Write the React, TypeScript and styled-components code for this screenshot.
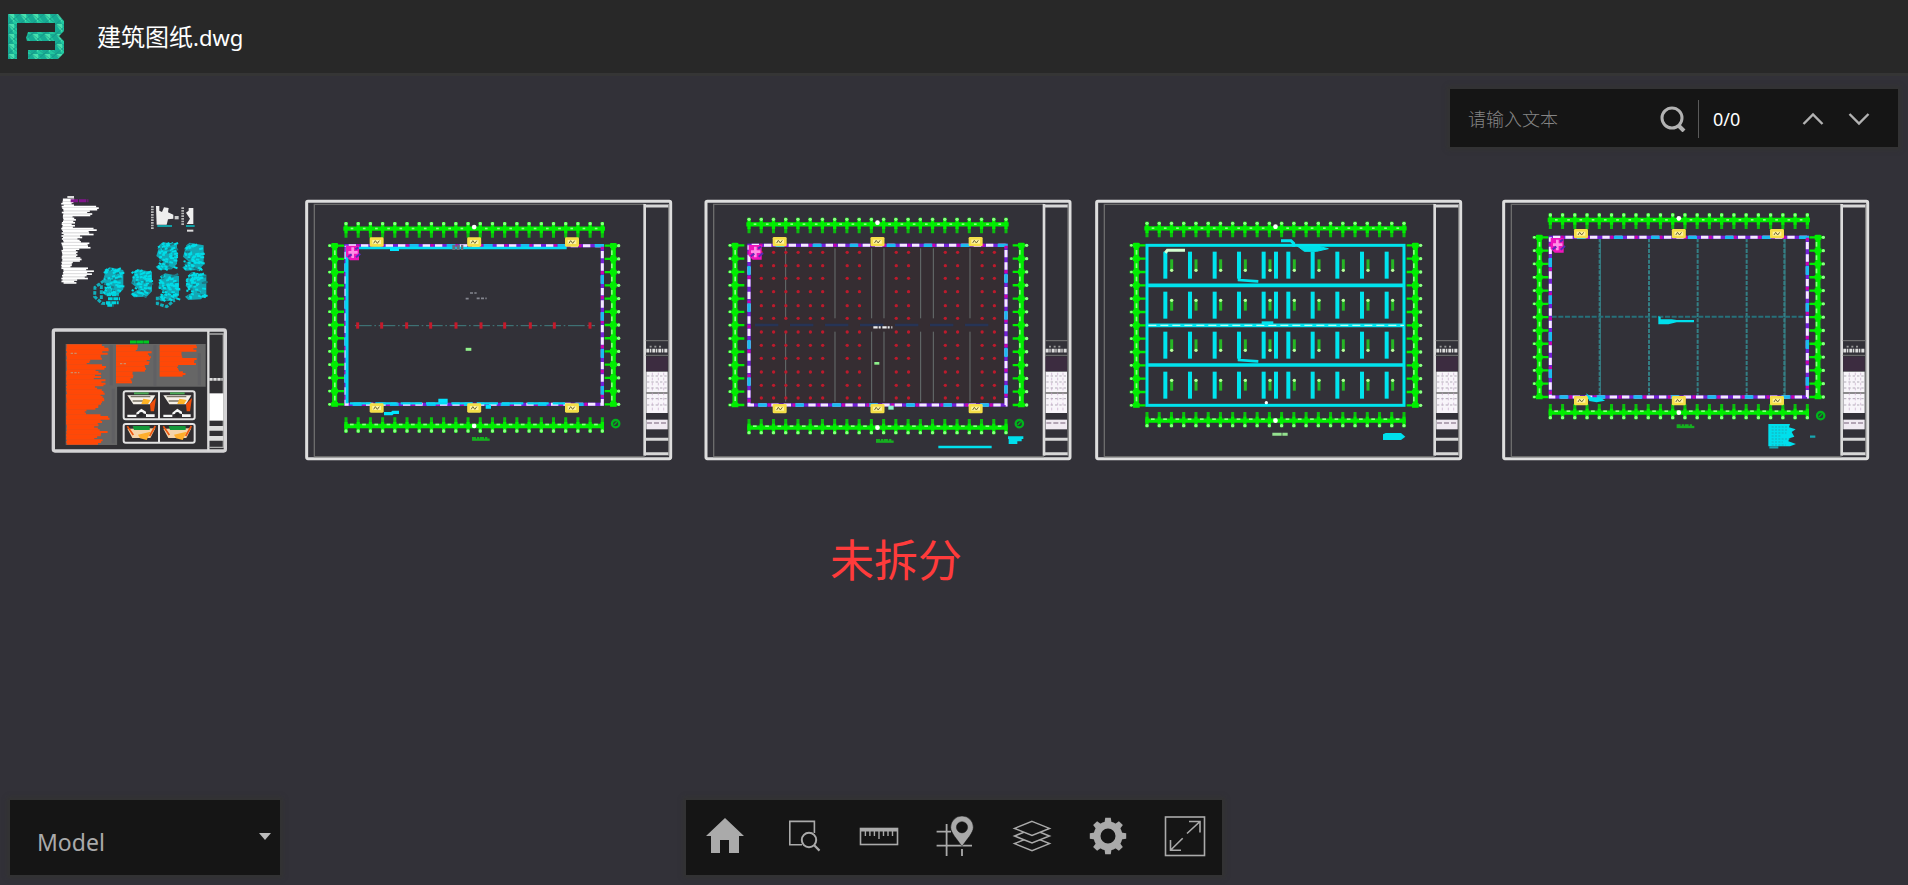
import React from "react";
import styled, { createGlobalStyle } from "styled-components";

const GlobalStyle = createGlobalStyle`
  * { box-sizing: border-box; }
  body {
    margin: 0;
    background: #323138;
    color: #fff;
    font-family: "Noto Sans", "Noto Sans CJK SC", sans-serif;
  }
`;

const Page = styled.div`
  display: flex;
  flex-direction: column;
  min-height: 100vh;
`;

const Header = styled.header`
  display: flex;
  align-items: center;
  gap: 32px;
  height: 76px;
  padding: 0 8px;
  background: #282828;
  border-bottom: 3px solid #353535;
`;

const FileName = styled.h1`
  margin: 0;
  font-size: 24px;
  line-height: 32px;
  font-weight: 400;
`;

const Extension = styled.span`
  font-size: 22px;
`;

const Stage = styled.main`
  display: flex;
  flex: 1;
  flex-direction: column;
  padding: 13px 10px 10px;
`;

const panel = `
  background: #151515;
  box-shadow: 0 0 4px 3px #333333;
`;

const SearchBar = styled.form`
  ${panel}
  display: flex;
  align-items: center;
  align-self: flex-end;
  width: 448px;
  height: 58px;
  padding: 2px 14px 0 18px;
`;

const SearchInput = styled.input`
  flex: 1;
  min-width: 0;
  height: 40px;
  padding: 0;
  border: 0;
  outline: 0;
  background: transparent;
  color: #ccc;
  font-family: inherit;
  font-size: 18px;
  &::placeholder { color: #858585; font-weight: 300; opacity: 1; }
`;

const IconButton = styled.button<{ $width: number }>`
  display: flex;
  align-items: center;
  justify-content: center;
  width: ${(p) => p.$width}px;
  height: 40px;
  padding: 0;
  border: 0;
  background: transparent;
  color: #b2b2b2;
  cursor: pointer;
`;

const MatchCount = styled.output`
  width: 94px;
  margin-left: 4px;
  padding-left: 14px;
  border-left: 1px solid #5a5a5a;
  font-size: 18px;
  line-height: 38px;
`;

const Drawing = styled.svg`
  display: block;
  width: calc(100% + 20px);
  height: auto;
  margin: 33px -10px 0;
`;

const Notice = styled.p`
  margin: 58px 0 22px;
  padding-right: 116px;
  color: #ff3b3b;
  font-size: 44px;
  line-height: 64px;
  font-weight: 400;
  text-align: center;
`;

const BottomBar = styled.footer`
  display: grid;
  grid-template-columns: 1fr auto 1fr;
  align-items: end;
  margin-top: auto;
`;

const SpacePicker = styled.div`
  ${panel}
  display: grid;
  align-items: center;
  width: 270px;
  height: 75px;
  > * { grid-area: 1 / 1; }
`;

const SpaceSelect = styled.select`
  width: 100%;
  height: 75px;
  padding: 8px 27px 0;
  border: 0;
  appearance: none;
  background: transparent;
  color: #aaa;
  font-family: inherit;
  font-size: 23px;
`;

const Caret = styled.svg`
  justify-self: end;
  margin: 0 8px 2px 0;
  pointer-events: none;
`;

const Toolbar = styled.nav`
  ${panel}
  display: flex;
  width: 536px;
  height: 75px;
  padding-bottom: 2px;
`;

const Tool = styled.button`
  display: flex;
  flex: 1;
  align-items: center;
  justify-content: center;
  padding: 0;
  border: 0;
  background: transparent;
  color: #aaa;
  cursor: pointer;
`;

const range = (n: number) => Array.from({ length: n }, (_, i) => i);

// Repeatable scatter in 0..1, so that small details look drawn by hand.
const scatter = (n: number) => {
  const v = Math.sin(n * 127.1 + 11.7) * 43758.5453;
  return v - Math.floor(v);
};

const Logo = () => (
  <svg width="57" height="46" viewBox="0 0 57 46" role="img" aria-label="Logo">
    <defs>
      <pattern id="facets" width="12" height="10" patternUnits="userSpaceOnUse">
        <rect width="12" height="10" fill="#22c8a0" />
        <path d="M0 0L6 10L0 10ZM6 0L12 10L12 0Z" fill="#17ab94" />
        <path d="M6 0L0 0L6 8Z" fill="#48e0ae" />
        <path d="M0 10L12 0M0 0L12 10" stroke="#148c80" strokeWidth=".6" />
      </pattern>
    </defs>
    <path
      fill="url(#facets)"
      d="M0 0H50L56 7V17L51 22L56 27V39L50 45H20V36H47V27H19L18 24L20 18H47V9H9V45H0Z"
    />
  </svg>
);

interface PlanProps {
  x0: number; x1: number; y0: number; y1: number;
  top: number; bottom: number; left: number; right: number;
}

const Dimensions = ({ x0, x1, y0, y1, top, bottom, left, right }: PlanProps) => {
  const xs = range(22).map((i) => x0 + ((x1 - x0) * i) / 21);
  const ys = range(13).map((i) => y0 + ((y1 - y0) * i) / 12);
  return (
    <g stroke="#00ee00" fill="none">
      <path strokeWidth="13" d={`M${x0 - 8} ${top}H${x1 + 8}M${x0 - 5} ${bottom}H${x1 + 5}`} />
      <path strokeWidth="15" d={`M${left} ${y0 - 8}V${y1 + 6}M${right} ${y0 - 8}V${y1 + 6}`} />
      <path
        strokeWidth="10"
        d={xs.map((x) => `M${x} ${top - 20}V${top + 14}M${x} ${bottom - 12}V${bottom + 20}`).join("")}
      />
      <path
        strokeWidth="9"
        opacity=".75"
        d={xs.map((x) => `M${x} ${top + 12}V${top + 27}M${x} ${bottom - 26}V${bottom - 10}`).join("")}
      />
      <path
        strokeWidth="7"
        d={ys.map((y) => `M${left - 20} ${y}H${left + 28}M${right - 26} ${y}H${right + 20}`).join("")}
      />
      <path
        strokeWidth="14"
        d={ys.map((y) => `M${left - 10} ${y}H${left + 10}M${right - 10} ${y}H${right + 10}`).join("")}
      />
      <g stroke="none" fill="#8cff84">
        {xs.map((x, i) => (
          <React.Fragment key={i}>
            <circle cx={x} cy={top - 15} r="5" />
            <circle cx={x} cy={bottom + 15} r="5" />
            {i < 21 && <rect x={x + 14} y={top - 3} width="8" height="5" />}
            {i < 21 && <rect x={x + 12} y={bottom - 7} width="11" height="5" />}
          </React.Fragment>
        ))}
        {ys.map((y, i) => (
          <React.Fragment key={i}>
            <circle cx={left - 15} cy={y} r="4" />
            <circle cx={right + 16} cy={y} r="5" />
            {i < 12 && <rect x={left - 2} y={y + 14} width="5" height="14" />}
            {i < 12 && <rect x={right - 7} y={y + 14} width="5" height="14" />}
          </React.Fragment>
        ))}
        <circle cx={(x0 + x1) / 2} cy={top - 5} r="7" fill="#fff" />
        <circle cx={(x0 + x1) / 2} cy={bottom} r="7" fill="#fff" />
      </g>
    </g>
  );
};

const Walls = ({ x0, x1, y0, y1 }: PlanProps) => (
  <g fill="none">
    <rect x={x0} y={y0} width={x1 - x0} height={y1 - y0} stroke="#7420d8" strokeWidth="10" />
    <rect x={x0} y={y0} width={x1 - x0} height={y1 - y0} stroke="#f4e8ff" strokeWidth="9" strokeDasharray="22 15" strokeDashoffset="-8" />
    <rect x={x0} y={y0} width={x1 - x0} height={y1 - y0} stroke="#1cbcf0" strokeWidth="10" strokeDasharray="27 84" strokeDashoffset="-80" />
    <rect x={x0} y={y0} width={x1 - x0} height={y1 - y0} stroke="#d000a8" strokeWidth="9" strokeDasharray="8 66" strokeDashoffset="-32" />
  </g>
);

const Stairs = ({ x0, x1, y0, y1 }: PlanProps) => (
  <g>
    {[92, (x1 - x0) / 2, x1 - x0 - 91].flatMap((dx) =>
      [y0 - 11, y1 + 11].map((y) => (
        <g key={`${dx}-${y}`} transform={`translate(${x0 + dx} ${y})`}>
          <rect x="-21" y="-14" width="42" height="28" rx="4" fill="#f5df48" />
          <rect x="-13" y="-6" width="26" height="12" fill="#fff4a0" />
          <path d="M-9 4L-4 -4L2 4L8 -4" stroke="#6d6738" strokeWidth="3" fill="none" />
        </g>
      ))
    )}
  </g>
);

const Pinwheel = ({ x, y }: { x: number; y: number }) => (
  <g transform={`translate(${x} ${y})`}>
    <path d="M-20 -20H19V24H-8L-20 12Z" fill="#f014bc" />
    <path d="M-13 0H15M0 -15V17" stroke="#ff8fe6" strokeWidth="8" />
    <path d="M-14 14L-3 6M8 -9L17 -15M10 15L23 4" stroke="#5b2bb8" strokeWidth="6" />
  </g>
);

const TitleBlock = () => (
  <g>
    <path d="M1049 42V797" stroke="#dcdcdc" strokeWidth="8" />
    <path d="M1121 42V797" stroke="#8a8a8a" strokeWidth="3" />
    <path d="M1049 48H1120M1049 748H1120M1049 791H1120" stroke="#d8d8d8" strokeWidth="9" />
    <path d="M1052 452H1120M1052 496H1120" stroke="#777" strokeWidth="3" />
    <rect x="1054" y="500" width="64" height="43" fill="#3c2c40" />
    <path d="M1054 482H1118" stroke="#ddd" strokeWidth="11" strokeDasharray="9 2 4 3" />
    <path d="M1064 470H1100" stroke="#999" strokeWidth="5" strokeDasharray="6 8" />
    <rect x="1054" y="545" width="64" height="124" fill="#f8f5fa" />
    <path d="M1056 558H1118M1056 576H1118M1056 594H1118M1056 626H1118M1056 645H1118" stroke="#b3acb8" strokeWidth="3" strokeDasharray="7 6" />
    <path d="M1054 609H1118" stroke="#555" strokeWidth="4" />
    <path d="M1072 548V668M1090 548V668M1106 548V668" stroke="#c5a8c8" strokeWidth="2" strokeDasharray="8 7" />
    <rect x="1054" y="689" width="64" height="29" fill="#f0eaf2" />
    <path d="M1056 699H1116" stroke="#9d8da0" strokeWidth="4" strokeDasharray="15 6" />
  </g>
);

interface SheetProps {
  x: number;
  shift?: number;
  plan: PlanProps;
  children: React.ReactNode;
}

// A sheet is drawn at three units per drawing unit.
const Sheet = ({ x, shift = 0, plan, children }: SheetProps) => (
  <g transform={`translate(${x} 10) scale(.33333)`}>
    <g transform={`translate(${shift} 0)`}>
      <rect x="35" y="34" width="1092" height="772" rx="4" fill="none" stroke="#dedede" strokeWidth="9" />
      <path d="M1049 43H58V800H1049" fill="none" stroke="#6c6c6c" strokeWidth="4" />
      <TitleBlock />
    </g>
    <Dimensions {...plan} />
    {children}
  </g>
);

const planA = { x0: 153, x1: 922, y0: 167, y1: 643, top: 116, bottom: 708, left: 119, right: 955 };
const planB = { x0: 162, x1: 933, y0: 166, y1: 645, top: 103, bottom: 713, left: 120, right: 979 };
const planC = { x0: 186, x1: 957, y0: 166, y1: 646, top: 115, bottom: 692, left: 154, right: 991 };
const planD = { x0: 181, x1: 952, y0: 142, y1: 621, top: 90, bottom: 668, left: 148, right: 984 };

const NorthMark = ({ x, y }: { x: number; y: number }) => (
  <g fill="none" stroke="#00b51c">
    <circle cx={x} cy={y} r="11" strokeWidth="7" />
    <path d={`M${x - 5} ${y + 4}L${x + 4} ${y - 5}`} strokeWidth="4" />
  </g>
);

const Caption = ({ x, y }: { x: number; y: number }) => (
  <g stroke="#16b020">
    <path d={`M${x - 27} ${y + 2}H${x + 26}`} strokeWidth="7" />
    <path d={`M${x - 27} ${y - 3}H${x + 20}`} strokeWidth="6" strokeDasharray="12 3 7 2" />
  </g>
);

const GroundFloor = () => (
  <Sheet x={295} plan={planA}>
    <Walls {...planA} />
    <path d="M156 172V640" stroke="#00d8f5" strokeWidth="9" />
    <path d="M190 174H815" stroke="#00dcf2" strokeWidth="8" />
    <path d="M165 640H810" stroke="#00dcf2" strokeWidth="7" strokeDasharray="64 12" />
    <path d="M285 177H312M430 632H458M572 650H588" stroke="#00e5ff" strokeWidth="12" />
    <path d="M267 671H290L294 667H312" stroke="#00e5ff" strokeWidth="10" fill="none" />
    <path d="M472 172H505" stroke="#66717d" strokeWidth="16" strokeDasharray="9 4" />
    <Stairs {...planA} />
    <Pinwheel x={173} y={187} />
    <path d="M180 407H900" stroke="#407d80" strokeWidth="3" strokeDasharray="50 8 5 8" />
    {[188, 260, 335, 407, 483, 558, 629, 706, 778, 885].map((x) => (
      <path key={x} d={`M${x} 397V416`} stroke="#c41a2b" strokeWidth="9" />
    ))}
    <path d="M512 326H525M545 325H575M525 309H545" stroke="#84868f" strokeWidth="5" strokeDasharray="9 4" />
    <path d="M512 478H529" stroke="#91ef8b" strokeWidth="9" />
    <NorthMark x={962} y={701} />
    <Caption x={558} y={747} />
  </Sheet>
);

const ColumnPlan = () => (
  <Sheet x={695} shift={-2} plan={planB}>
    <rect x="166" y="170" width="763" height="471" fill="#38292e" opacity=".55" />
    <path
      d={[272, 420, 530, 567, 677, 715, 825].map((x) => `M${x} 175V385M${x} 425V635`).join("")}
      stroke="#68706f" strokeWidth="3"
    />
    {range(12).flatMap((r) =>
      range(20).map((c) => {
        const x = 199 + c * 36.8;
        const missing = c === 6 || c === 9 || c === 10 || c === 13 || c === 14 || c === 17;
        if (missing) return null;
        return <circle key={`${r}-${c}`} cx={x} cy={[187, 227, 265, 305, 347, 385, 426, 466, 505, 546, 586, 624][r]} r="5" fill="#bd1a2c" />;
      })
    )}
    <path d="M180 405H915" stroke="#263456" strokeWidth="8" strokeDasharray="70 35" />
    <path d="M535 412H592" stroke="#eee" strokeWidth="7" strokeDasharray="13 3 6 5" />
    <path d="M538 520H553" stroke="#8df08b" strokeWidth="8" />
    <Walls {...planB} />
    <Stairs {...planB} />
    <Pinwheel x={181} y={185} />
    <path d="M580 653H596" stroke="#8df6ca" strokeWidth="12" />
    <path d="M730 771H890" stroke="#00dfec" strokeWidth="8" />
    <path d="M939 743H985M941 750H980M941 758H967" stroke="#00dfec" strokeWidth="8" />
    <NorthMark x={973} y={701} />
    <Caption x={570} y={753} />
  </Sheet>
);

const RoofPlan = () => (
  <Sheet x={1085} plan={planC}>
    <g stroke="#00e4ee" fill="none">
      <rect x="186" y="166" width="771" height="480" strokeWidth="9" />
      <path d="M186 286H957M186 406H957M186 525H957" strokeWidth="11" />
      <path d="M190 406H957" stroke="#c0fff0" strokeWidth="4" strokeDasharray="24 12" />
      <path d="M588 152H618L626 160V170" strokeWidth="9" />
      <path d="M637 168H695L730 176L695 184H658Z" fill="#00dfe8" strokeWidth="3" />
      {range(4).map((r) => (
        <g key={r} strokeWidth="12">
          {[241, 315, 389, 462, 536, 573, 610, 683, 757, 831, 905].map((x) => (
            <path key={x} d={`M${x} ${185 + r * 120}V${266 + r * 120}`} />
          ))}
          {r % 2 === 0 && <path d={`M462 ${262 + r * 120}V${270 + r * 120}L520 ${274 + r * 120}`} strokeWidth="8" />}
        </g>
      ))}
      <path d="M530 399H565" strokeWidth="10" />
    </g>
    <path d="M241 188L247 181H300" stroke="#d4ffd2" strokeWidth="9" fill="none" />
    {range(4).flatMap((r) =>
      [260, 333, 407, 481, 555, 628, 702, 775, 849, 923].map((x) => (
        <g key={`${r}-${x}`}>
          <path d={`M${x} ${208 + r * 120}V${242 + r * 120}`} stroke="#26b624" strokeWidth="9" />
          <circle cx={x} cy={(r % 2 ? 211 : 241) + r * 120} r="5" fill="#b7ff9c" />
        </g>
      ))
    )}
    <circle cx="544" cy="638" r="5" fill="#fff" />
    <path d="M894 733L902 729H948L961 740L948 750H894Z" fill="#00dfec" />
    <path d="M562 733H608" stroke="#94e08f" strokeWidth="9" strokeDasharray="28 2" />
  </Sheet>
);

const BeamPlan = () => (
  <Sheet x={1490} shift={6} plan={planD}>
    <path d="M329 145V618M477 145V618M623 145V618M770 145V618M883 145V618" stroke="#337f85" strokeWidth="6" strokeDasharray="12 4" />
    <path d="M331 145V618M885 145V618" stroke="#377f86" strokeWidth="3" />
    <path d="M185 380H948" stroke="#26707a" strokeWidth="6" strokeDasharray="15 5" />
    <path d="M505 378L512 382V388H545L560 390H612V397H560L535 403H505Z" fill="#00dfec" />
    <Walls {...planD} />
    <Stairs {...planD} />
    <Pinwheel x={202} y={164} />
    <path d="M288 610L305 622H330L345 632L320 637L298 633Z" fill="#00dfec" />
    <NorthMark x={992} y={677} />
    <Caption x={587} y={709} />
    <path d="M835 702H900L897 712L917 718L905 726L913 740L898 745L895 754L918 762L900 769H835Z" fill="#00dfec" />
    <path d="M838 772H865M960 740H976" stroke="#17a5b0" strokeWidth="7" />
    {range(7).map((i) => (
      <path key={i} d={`M845 ${711 + i * 9}H${870 + scatter(i) * 35}`} stroke="#25959e" strokeWidth="2" strokeDasharray="6 4" />
    ))}
  </Sheet>
);

const Blob = ({ x, y, seed }: { x: number; y: number; seed: number }) => (
  <g transform={`translate(${x} ${y})`}>
    <path d="M-22 -36L-12 -44L30 -36V22L14 38L-24 40L-34 30L-10 16L-32 -2Z" fill="#12a8b6" />
    {range(60).map((i) => {
      const a = scatter(seed + i);
      const b = scatter(seed * 3 + i * 7 + 90);
      return (
        <path
          key={i}
          d={`M${-32 + a * 54} ${-38 + b * 74}l${6 + a * 6} ${-5 + b * 10}`}
          stroke={i % 5 ? "#00dde8" : "#1d7a86"}
          strokeWidth="6"
        />
      );
    })}
  </g>
);

const NotesAndDetails = () => (
  <g transform="translate(40 0) scale(.33333)">
    {range(58).map((i) => {
      const y = 58 + i * 4.4;
      const section = [[4, 34], [7, 110], [11, 98], [19, 40], [24, 104], [29, 62], [33, 98], [42, 58], [46, 36], [54, 92], [58, 52]].find(([end]) => i <= end)!;
      return (
        <path key={i} d={`M${63 + scatter(i) * 8} ${y}h${section[1] * (0.7 + scatter(i + 8) * 0.3)}`} stroke="#fff" strokeWidth="5" />
      );
    })}
    <path d="M82 51H102" stroke="#ddd" strokeWidth="6" />
    <path d="M92 62H145" stroke="#81158c" strokeWidth="9" strokeDasharray="22 3" />
    <path d="M337 78V148M428 82V136" stroke="#b7b7b7" strokeWidth="8" strokeDasharray="5 3" />
    <path d="M348 78H358V92L366 96L372 82L386 84L384 97L400 104V116L384 118L380 134H350ZM438 98L446 92V84H460V132H440L450 116Z" fill="#eee" />
    <path d="M404 108H416V118H404Z" fill="#ccc" />
    <path d="M352 138H396M438 138H464" stroke="#129ea4" strokeWidth="6" />
    <path d="M441 152H460" stroke="#ddd" strokeWidth="6" />
    <Blob x={381} y={230} seed={3} />
    <Blob x={461} y={232} seed={20} />
    <Blob x={220} y={306} seed={41} />
    <Blob x={306} y={312} seed={67} />
    <Blob x={387} y={324} seed={88} />
    <Blob x={469} y={320} seed={104} />
    <path d="M192 302L165 322L164 350L186 370L205 371M184 316V358M352 350V371L380 380L404 360" stroke="#11aeba" strokeWidth="9" strokeDasharray="11 4" fill="none" />
    <path d="M198 368H236M204 356H240M200 344H236M202 376H220" stroke="#00d4df" strokeWidth="9" strokeDasharray="14 2" />

    <rect x="40" y="450" width="516" height="363" rx="5" fill="#313034" stroke="#d4d3d5" strokeWidth="10" />
    <path d="M77 492H497V620H232V795H77Z" fill="#666" />
    <path d="M270 486H327" stroke="#00c820" strokeWidth="9" strokeDasharray="19 1" />
    {range(60).map((i) => (
      <path key={i} d={`M${78 + scatter(i) * 3} ${496 + i * 5}h${[130, 128, 110, 72, 130, 112, 105, 125, 110, 120][Math.floor(i / 3) % 10] * (0.75 + scatter(i + 5) * 0.25)}`} stroke="#ff4807" strokeWidth="6" />
    ))}
    {range(23).map((i) => (
      <g key={i} stroke="#ff4807" strokeWidth="6">
        <path d={`M228 ${497 + i * 5}h${[68, 107, 102, 90, 55, 50][Math.floor(i / 4)] * (0.86 + scatter(i) * 0.14)}`} />
        {i < 19 && <path d={`M359 ${497 + i * 5}h${[112, 68, 115, 60, 78][Math.floor(i / 4)] * (0.86 + scatter(i + 7) * 0.14)}`} />}
      </g>
    ))}
    <path d="M92 578H118M240 551H260M92 520H110" stroke="#d08b65" strokeWidth="4" strokeDasharray="7 4" />
    <path d="M214 496V616M345 496V618M478 520V616M220 626V790" stroke="#606063" strokeWidth="9" />
    <rect x="232" y="621" width="262" height="184" fill="#303033" />
    <rect x="251" y="634" width="213" height="84" rx="6" fill="#312e31" stroke="#e3e3e3" strokeWidth="6" />
    <rect x="251" y="732" width="213" height="56" rx="6" fill="#312e31" stroke="#e3e3e3" strokeWidth="6" />
    <path d="M357 634V718M357 732V788" stroke="#e3e3e3" strokeWidth="6" />
    {[304, 412].map((x) => (
      <g key={x}>
        <path d={`M${x - 42} 646H${x + 42}L${x + 26} 673H${x - 24}Z`} fill="#f5efe7" />
        <path d={`M${x - 32} 650H${x + 27}M${x - 26} 663H${x + 18}`} stroke="#7a7365" strokeWidth="4" />
        <path d={`M${x + 6} 656L${x + 28} 660L${x + 20} 672H${x}Z`} fill="#ffb326" />
        <path d={`M${x - 22} 640H${x + 22}`} stroke="#4caa56" strokeWidth="6" />
        <path d={`M${x - 42} 711H${x - 15}V698L${x} 686L${x + 14} 695V711H${x + 40}V703H${x + 20}L${x} 700L${x - 18} 704H${x - 42}Z`} fill="#f7f7f7" />
        <circle cx={x} cy="703" r="7" fill="#252529" />
        <path d={`M${x + 26} 672L${x + 44} 654L${x + 38} 694H${x + 28}Z`} fill="#ef4d0b" />
        <path d={`M${x - 42} 746L${x - 27} 774H${x + 27}L${x + 42} 745Z`} fill="#f5d4aa" />
        <path d={`M${x - 26} 738H${x + 25}V750H${x - 22}Z`} fill="#14983a" />
        <path d={`M${x - 10} 764L${x + 28} 755L${x + 16} 780L${x - 4} 775Z`} fill="#ffae2b" />
        <path d={`M${x - 42} 739L${x - 24} 765M${x + 42} 738L${x + 25} 768`} stroke="#ee5710" strokeWidth="5" />
      </g>
    ))}
    <path d="M505 453V812" stroke="#ddd" strokeWidth="7" />
    <path d="M506 462H550V802H506" fill="none" stroke="#aaa" strokeWidth="4" />
    <path d="M508 598H548" stroke="#ddd" strokeWidth="8" strokeDasharray="10 2" />
    <rect x="508" y="640" width="42" height="82" fill="#fff" />
    <path d="M506 745H550M506 775H550" stroke="#ddd" strokeWidth="14" />
  </g>
);

const HomeIcon = () => <path d="M23 3L42 21H37V38H27V25H18V38H9V21H4Z" fill="currentColor" />;

const AreaSearchIcon = () => (
  <g fill="none" stroke="currentColor" strokeWidth="1.6">
    <path d="M35.4 18V6.4H10.8V29.7H23" />
    <circle cx="30" cy="25" r="7.2" strokeWidth="2" />
    <path d="M35.2 30.3L40.5 35.6" strokeWidth="2.2" />
  </g>
);

const RulerIcon = () => (
  <g fill="none" stroke="currentColor" strokeWidth="1.6">
    <rect x="5.5" y="13.5" width="37" height="16" />
    <path d="M5 15H43" strokeWidth="3" />
    <path d="M10.4 16V21M14.9 16V21M19.4 16V21M24 16V24M28.5 16V21M33 16V21M37.5 16V21" strokeWidth="1.4" />
  </g>
);

const LocateIcon = () => (
  <g>
    <path d="M14.6 9V41M4.6 16.7H19M4.6 30.7H40M30 34V41" stroke="currentColor" strokeWidth="1.8" />
    <path fillRule="evenodd" fill="currentColor" stroke="#151515" strokeWidth=".5" d="M30 1A11.3 11.3 0 0 1 41.3 12.3C41.3 18 35 24 30 31.5C25 24 18.7 18 18.7 12.3A11.3 11.3 0 0 1 30 1ZM30 6.7A5.6 5.6 0 1 0 30 17.9A5.6 5.6 0 1 0 30 6.7Z" />
  </g>
);

const LayersIcon = () => (
  <g fill="#151515" stroke="currentColor" strokeWidth="1.5">
    {[28.6, 21, 13.4].map((y) => (
      <path key={y} d={`M23 ${y - 7}L40.5 ${y}L23 ${y + 7}L5.5 ${y}Z`} />
    ))}
  </g>
);

const GearIcon = () => (
  <g>
    {range(8).map((i) => (
      <path key={i} transform={`rotate(${i * 45} 23 21)`} d="M19.5 8L20.2 2.8H25.8L26.5 8Z" fill="currentColor" />
    ))}
    <circle cx="23" cy="21" r="11" fill="none" stroke="currentColor" strokeWidth="7" />
  </g>
);

const FullScreenIcon = () => (
  <g fill="none" stroke="currentColor" strokeWidth="1.6">
    <rect x="3.5" y="2" width="39" height="38.5" />
    <path d="M25 18.5L38 6.5M27 6.5H38V17.5M20.7 23.3L8.5 35.2M8.5 25V35.2H19" />
  </g>
);

const tools = [
  { label: "主视图", Icon: HomeIcon },
  { label: "框选放大", Icon: AreaSearchIcon },
  { label: "测量", Icon: RulerIcon },
  { label: "定位", Icon: LocateIcon },
  { label: "图层", Icon: LayersIcon },
  { label: "设置", Icon: GearIcon },
  { label: "全屏", Icon: FullScreenIcon },
];

export default function App() {
  return (
    <Page>
      <GlobalStyle />
      <Header>
        <Logo />
        <FileName>建筑图纸<Extension>.dwg</Extension></FileName>
      </Header>
      <Stage>
        <SearchBar onSubmit={(e) => e.preventDefault()}>
          <SearchInput type="text" aria-label="请输入文本" placeholder="请输入文本" />
          <IconButton $width={42} type="submit" aria-label="搜索">
            <svg width="26" height="26" viewBox="0 0 26 26" fill="none" stroke="currentColor">
              <circle cx="12" cy="12" r="10" strokeWidth="3" />
              <path d="M19 20L24 25" strokeWidth="4" />
            </svg>
          </IconButton>
          <MatchCount>0/0</MatchCount>
          <IconButton $width={42} type="button" aria-label="上一个">
            <svg width="22" height="14" viewBox="0 0 22 14" fill="none" stroke="currentColor" strokeWidth="2.4">
              <path d="M1.5 12L11 2.5L20.5 12" />
            </svg>
          </IconButton>
          <IconButton $width={50} type="button" aria-label="下一个">
            <svg width="22" height="14" viewBox="0 0 22 14" fill="none" stroke="currentColor" strokeWidth="2.4">
              <path d="M1.5 2L11 11.5L20.5 2" />
            </svg>
          </IconButton>
        </SearchBar>
        <Drawing viewBox="0 0 1908 290" role="img" aria-label="建筑图纸">
          <NotesAndDetails />
          <GroundFloor />
          <ColumnPlan />
          <RoofPlan />
          <BeamPlan />
        </Drawing>
        <Notice>未拆分</Notice>
        <BottomBar>
          <SpacePicker>
            <SpaceSelect aria-label="Model" defaultValue="Model">
              <option>Model</option>
            </SpaceSelect>
            <Caret width="14" height="8" viewBox="0 0 14 8" aria-hidden="true">
              <path d="M1 0H13L7 7Z" fill="#bbb" />
            </Caret>
          </SpacePicker>
          <Toolbar aria-label="工具">
            {tools.map(({ label, Icon }) => (
              <Tool key={label} type="button" aria-label={label}>
                <svg width="44" height="44" viewBox="0 0 44 44"><Icon /></svg>
              </Tool>
            ))}
          </Toolbar>
        </BottomBar>
      </Stage>
    </Page>
  );
}
